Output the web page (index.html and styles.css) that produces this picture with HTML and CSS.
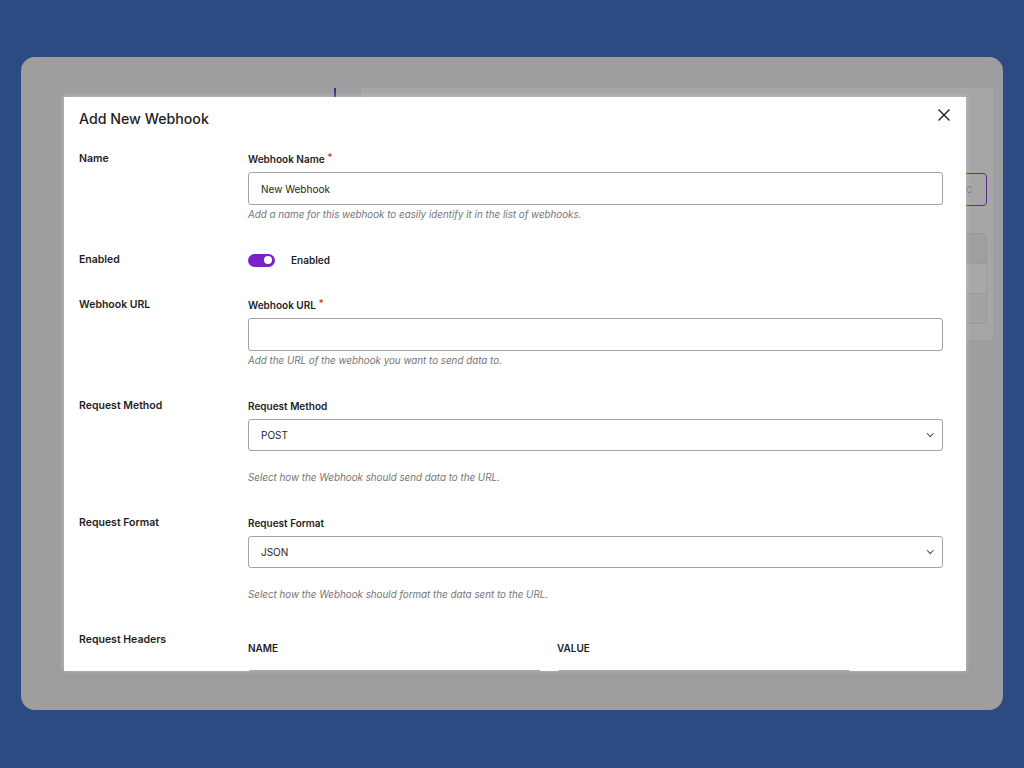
FILE: index.html
```html
<!DOCTYPE html>
<html lang="en">
<head>
    <meta charset="UTF-8">
    <meta name="viewport" content="width=device-width, initial-scale=1.0">
    <title>Add New Webhook</title>
    <link rel="stylesheet" href="styles.css">
</head>
<body>
    <div class="window">
        <div class="app">
            <div class="app-side"><span class="menu-mark"></span></div>
            <div class="app-panel">
                <div class="app-search"><span class="app-search-box">c</span></div>
                <div class="app-table">
                    <div class="app-row head"></div>
                    <div class="app-row"></div>
                    <div class="app-row odd"></div>
                </div>
            </div>
        </div>

        <div class="modal">
            <div class="modal-header">
                <h2>Add New Webhook</h2>
                <button class="close-btn" aria-label="Close">
                    <svg width="14" height="14" viewBox="0 0 14 14"><path d="M1.5 1.5 L12.5 12.5 M12.5 1.5 L1.5 12.5" stroke="#1e1e1e" stroke-width="1.4" fill="none"/></svg>
                </button>
            </div>

            <div class="modal-body">
                <div class="form-row">
                    <div class="row-label">Name</div>
                    <div class="row-field">
                        <label class="field-label">Webhook Name <span class="req">*</span></label>
                        <input class="text-input" type="text" value="New Webhook">
                        <p class="help">Add a name for this webhook to easily identify it in the list of webhooks.</p>
                    </div>
                </div>

                <div class="form-row">
                    <div class="row-label">Enabled</div>
                    <div class="row-field toggle-field">
                        <span class="toggle"><span class="knob"></span></span>
                        <span class="toggle-text">Enabled</span>
                    </div>
                </div>

                <div class="form-row">
                    <div class="row-label">Webhook URL</div>
                    <div class="row-field">
                        <label class="field-label">Webhook URL <span class="req">*</span></label>
                        <input class="text-input" type="text" value="">
                        <p class="help">Add the URL of the webhook you want to send data to.</p>
                    </div>
                </div>

                <div class="form-row">
                    <div class="row-label">Request Method</div>
                    <div class="row-field">
                        <label class="field-label">Request Method</label>
                        <div class="select">POST<span class="chev"></span></div>
                        <p class="help spaced">Select how the Webhook should send data to the URL.</p>
                    </div>
                </div>

                <div class="form-row">
                    <div class="row-label">Request Format</div>
                    <div class="row-field">
                        <label class="field-label">Request Format</label>
                        <div class="select">JSON<span class="chev"></span></div>
                        <p class="help spaced">Select how the Webhook should format the data sent to the URL.</p>
                    </div>
                </div>

                <div class="form-row">
                    <div class="row-label">Request Headers</div>
                    <div class="row-field headers">
                        <div class="header-col">
                            <div class="col-title">NAME</div>
                            <input class="text-input" type="text">
                        </div>
                        <div class="header-col">
                            <div class="col-title">VALUE</div>
                            <input class="text-input" type="text">
                        </div>
                    </div>
                </div>
            </div>
        </div>
    </div>
</body>
</html>
```

FILE: styles.css
```css
body {
    margin: 0;
    background-color: #2c4b82;
    font-family: Inter, "Noto Sans", sans-serif;
    color: #1e1e1e;
}

.window {
    position: relative;
    margin: 57px 21px 0 21px;
    height: 653px;
    background-color: #9e9ea0;
    border-radius: 14px;
    overflow: hidden;
}

/* page behind the overlay */
.app {
    display: flex;
    padding-top: 31px;
}

.app-side {
    width: 340px;
    position: relative;
}

.menu-mark {
    position: absolute;
    left: 313px;
    top: 0;
    width: 2px;
    height: 12px;
    background-color: #4d2a7a;
}

.app-panel {
    flex: 1;
    margin-right: 10px;
    height: 252px;
    background-color: #a6a6a7;
    padding: 85px 6px 0 0;
    box-sizing: border-box;
}

.app-search {
    display: flex;
    justify-content: flex-end;
}

.app-search-box {
    width: 40px;
    height: 33px;
    border: 1.5px solid #55337f;
    border-radius: 4px;
    font-size: 11px;
    color: #7c7c7c;
    line-height: 31px;
    text-align: right;
    padding-right: 14px;
    box-sizing: border-box;
}

.app-table {
    margin-top: 27px;
    margin-left: auto;
    width: 100px;
    border: 1px solid #999;
    border-radius: 4px;
    overflow: hidden;
}

.app-row {
    height: 29px;
    background-color: #a9a9aa;
    border-top: 1px solid #9a9a9b;
}

.app-row.head {
    background-color: #9f9fa0;
    border-top: none;
}

.app-row.odd {
    background-color: #a3a3a4;
}

/* modal */
.modal {
    position: absolute;
    left: 43px;
    top: 40px;
    width: 902px;
    height: 574px;
    background-color: #fff;
    box-shadow: 0 0 6px rgba(255, 255, 255, 0.5), 0 2px 8px rgba(0, 0, 0, 0.12);
    overflow: hidden;
    box-sizing: border-box;
    padding: 12px 23px 0 15px;
}

.modal-header {
    display: flex;
    justify-content: space-between;
    align-items: center;
}

.modal-header h2 {
    margin: 0;
    font-size: 14.2px;
    line-height: 20px;
    font-weight: 500;
}

.close-btn {
    background: none;
    border: none;
    padding: 0;
    margin: -8px -8px 0 0;
    width: 14px;
    height: 14px;
    cursor: pointer;
}

.modal-body {
    display: flex;
    flex-direction: column;
    gap: 31px;
    margin-top: 23px;
}

.form-row {
    display: flex;
}

.row-label {
    width: 169px;
    flex-shrink: 0;
    font-size: 10.5px;
    line-height: 14px;
    font-weight: 600;
}

.row-field {
    flex: 1;
    display: flex;
    flex-direction: column;
}

.field-label {
    font-size: 10px;
    line-height: 14px;
    font-weight: 600;
}

.req {
    color: #d1471f;
    font-size: 10px;
    vertical-align: top;
    line-height: 10px;
}

.text-input {
    margin-top: 6px;
    height: 33px;
    border: 1px solid #a3a3a3;
    border-radius: 3px;
    padding: 0 12px;
    font-family: inherit;
    font-size: 10px;
    color: #1e1e1e;
    box-sizing: border-box;
}

.select {
    margin-top: 6px;
    height: 32px;
    border: 1px solid #a3a3a3;
    border-radius: 3px;
    padding: 0 12px;
    font-size: 10px;
    line-height: 30px;
    box-sizing: border-box;
    display: flex;
    justify-content: space-between;
    align-items: center;
}

.chev {
    width: 3.5px;
    height: 3.5px;
    border-right: 1.2px solid #444;
    border-bottom: 1.2px solid #444;
    transform: rotate(45deg);
    margin: -3px -2px 0 0;
}

.help {
    margin: 3px 0 0 0;
    font-size: 9.8px;
    line-height: 14px;
    font-style: italic;
    color: #757575;
}

.help.spaced {
    margin-top: 20px;
}

.toggle-field {
    flex-direction: row;
    align-items: center;
    gap: 16px;
}

.toggle {
    width: 27px;
    height: 13px;
    border-radius: 7px;
    background-color: #7a22c7;
    position: relative;
}

.knob {
    position: absolute;
    right: 3px;
    top: 2.5px;
    width: 8px;
    height: 8px;
    border-radius: 50%;
    background-color: #fff;
}

.toggle-text {
    font-size: 10px;
    line-height: 14px;
    font-weight: 600;
}

.headers {
    flex-direction: row;
    gap: 15px;
    padding-top: 8px;
}

.header-col {
    width: 294px;
    display: flex;
    flex-direction: column;
}

.col-title {
    font-size: 10px;
    line-height: 14px;
    font-weight: 600;
}

.header-col .text-input {
    margin-top: 15px;
}
```
